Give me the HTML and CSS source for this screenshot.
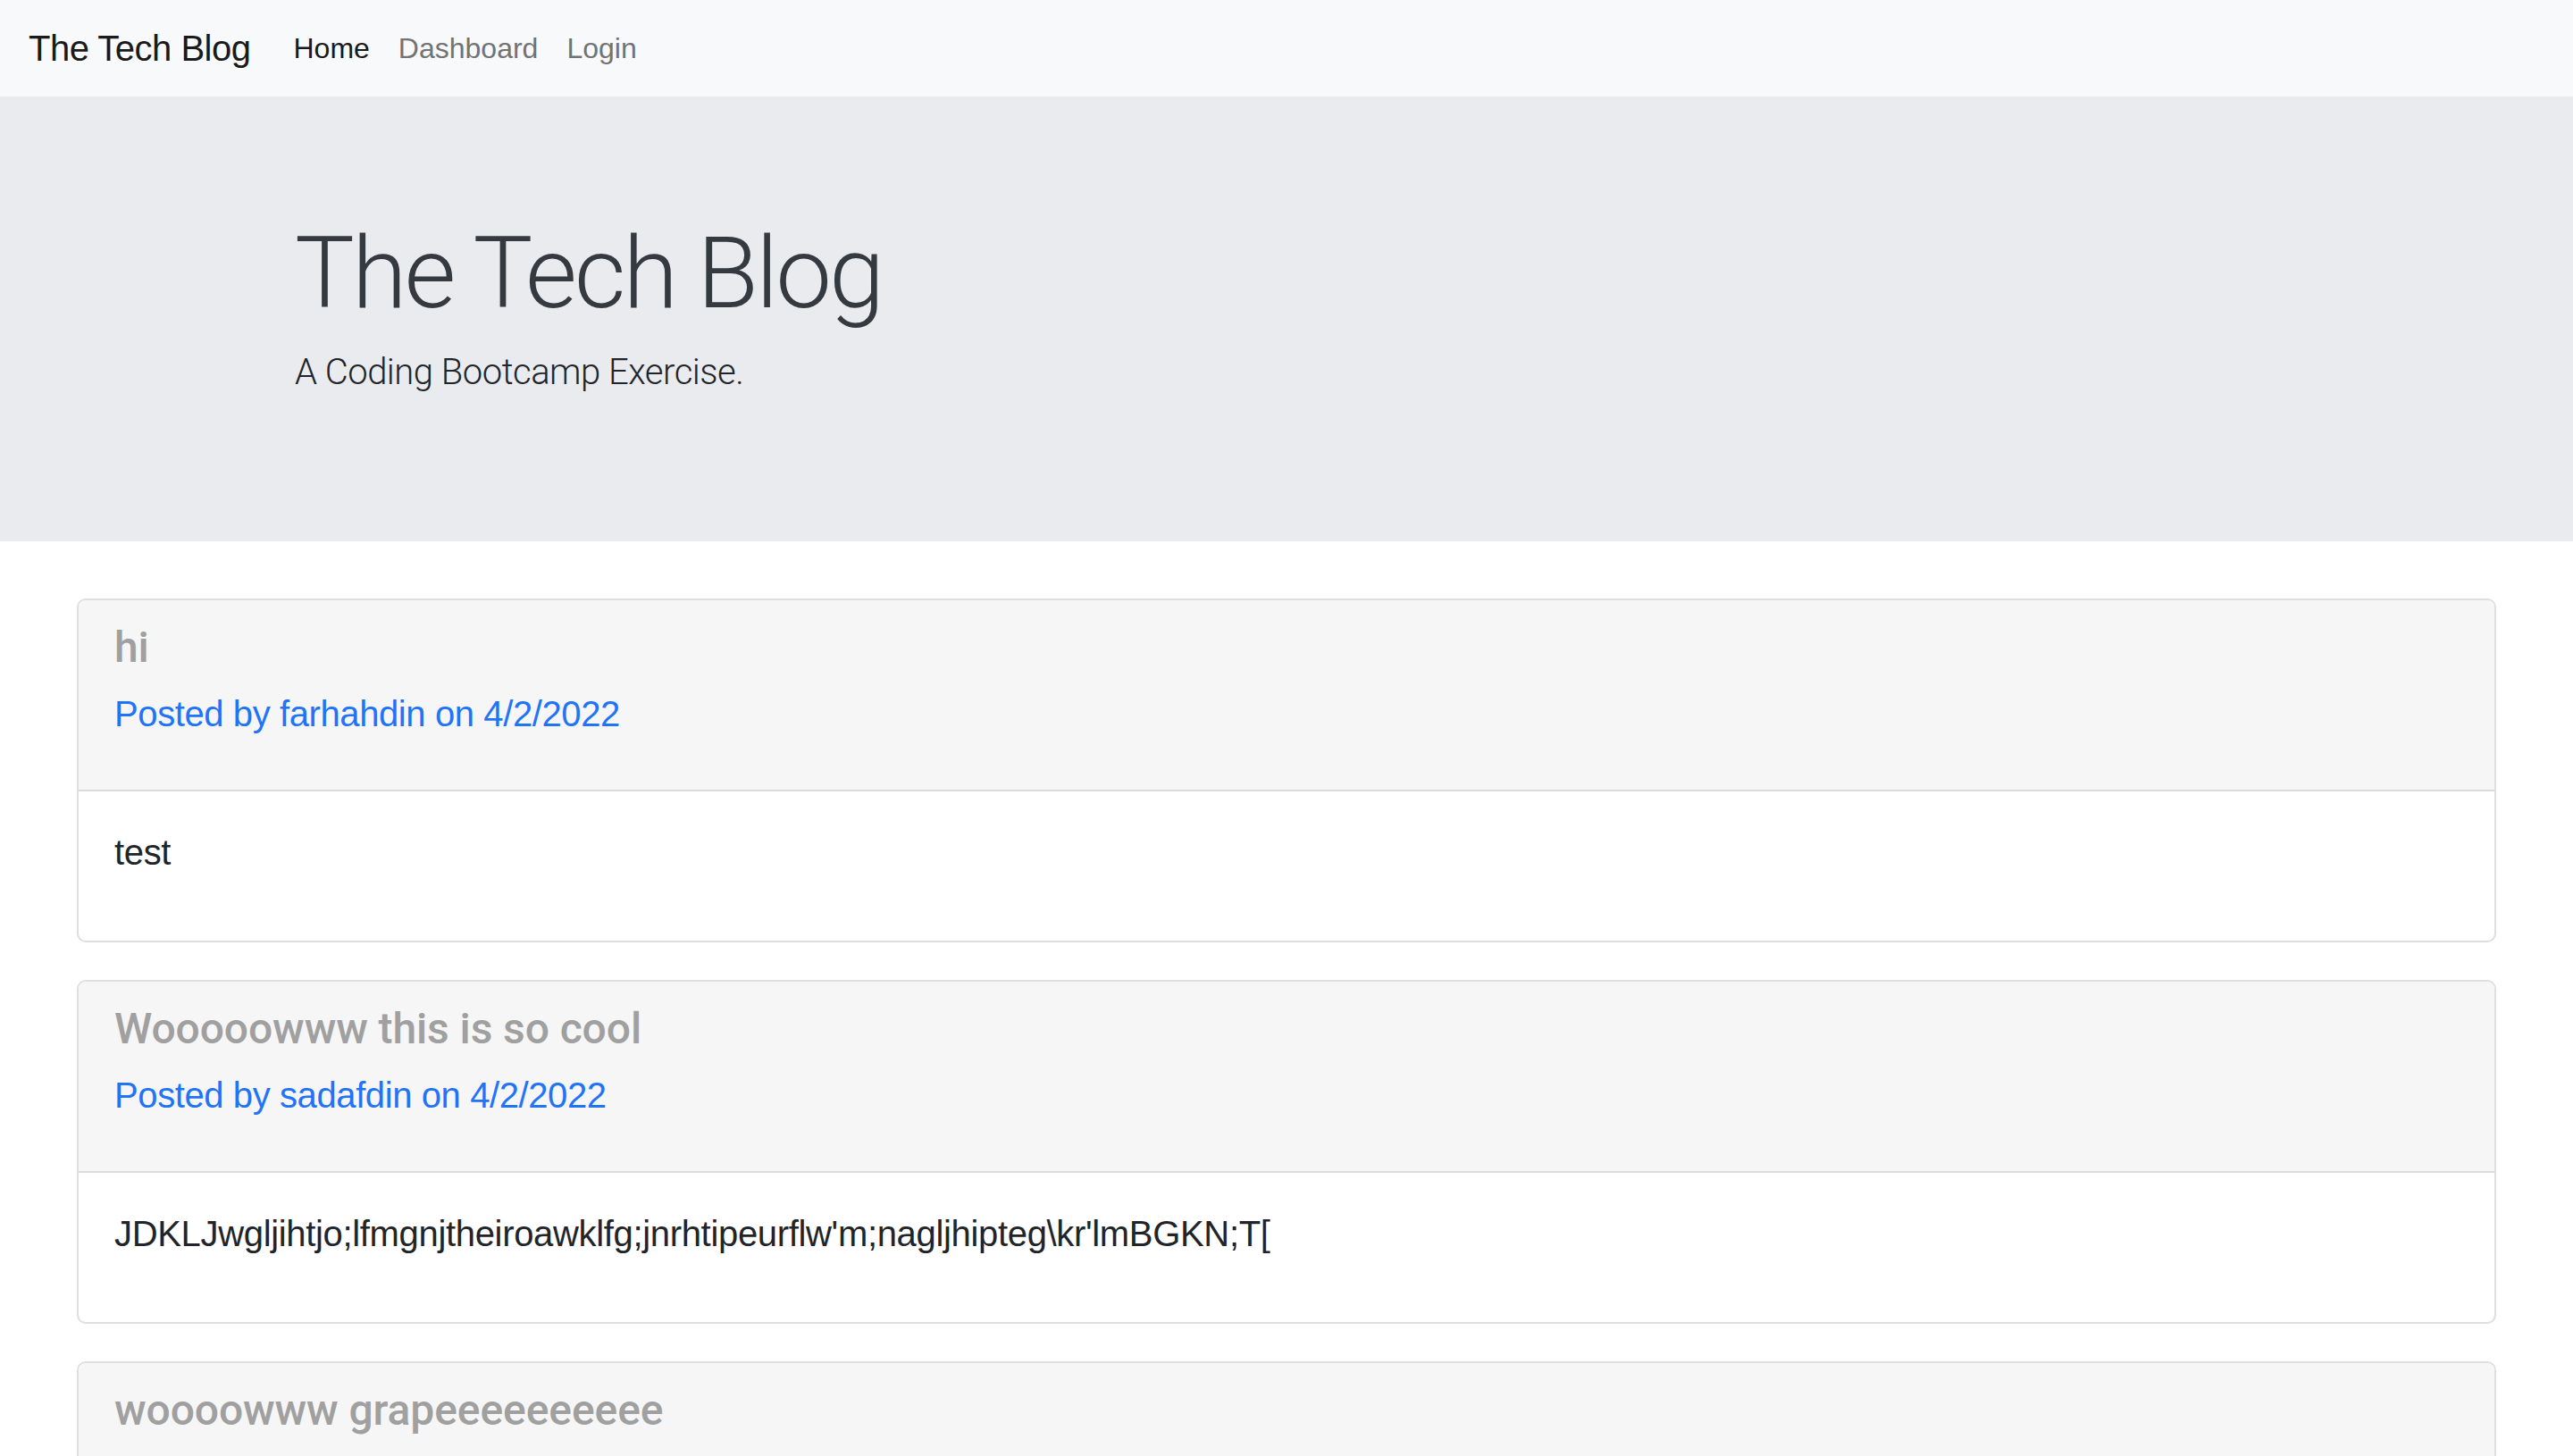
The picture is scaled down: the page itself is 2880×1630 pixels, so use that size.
FILE: index.html
```html
<!DOCTYPE html>
<html lang="en">
<head>
<meta charset="utf-8">
<title>The Tech Blog</title>
<link rel="stylesheet" href="styles.css">
</head>
<body>
<nav class="navbar">
  <a class="brand" href="#">The Tech Blog</a>
  <ul class="nav">
    <li><a class="nav-link active" href="#">Home</a></li>
    <li><a class="nav-link" href="#">Dashboard</a></li>
    <li><a class="nav-link" href="#">Login</a></li>
  </ul>
</nav>
<header class="jumbotron">
  <div class="container">
    <h1 class="display">The Tech Blog</h1>
    <p class="lead">A Coding Bootcamp Exercise.</p>
  </div>
</header>
<main class="posts">
  <article class="card">
    <div class="card-header">
      <h4 class="card-title">hi</h4>
      <p class="meta">Posted by farhahdin on 4/2/2022</p>
    </div>
    <div class="card-body">
      <p>test</p>
    </div>
  </article>
  <article class="card">
    <div class="card-header">
      <h4 class="card-title">Wooooowww this is so cool</h4>
      <p class="meta">Posted by sadafdin on 4/2/2022</p>
    </div>
    <div class="card-body">
      <p>JDKLJwgljihtjo;lfmgnjtheiroawklfg;jnrhtipeurflw'm;nagljhipteg\kr'lmBGKN;T[</p>
    </div>
  </article>
  <article class="card">
    <div class="card-header">
      <h4 class="card-title">woooowww grapeeeeeeeeee</h4>
    </div>
  </article>
</main>
</body>
</html>
```
FILE: styles.css
```css
* {
  box-sizing: border-box;
}

html, body {
  margin: 0;
  padding: 0;
}

body {
  font-family: "Liberation Sans", Arial, sans-serif;
  color: #212529;
  background: #ffffff;
  overflow-x: hidden;
}

a {
  text-decoration: none;
}

/* Navbar */
.navbar {
  display: flex;
  align-items: center;
  height: 108px;
  padding: 0 32px;
  background: #f8f9fa;
}

.brand {
  font-size: 40px;
  line-height: 60px;
  letter-spacing: -0.5px;
  color: #1a1a1a;
  margin-right: 32px;
}

.nav {
  display: flex;
  list-style: none;
  margin: 0;
  padding: 0;
}

.nav-link {
  display: block;
  font-size: 32px;
  line-height: 46px;
  padding: 0 16px;
  color: #727374;
}

.nav-link.active {
  color: #1a1a1a;
}

/* Jumbotron */
.jumbotron {
  background: #e9ebef;
  padding: 131px 0 0;
  height: 498px;
}

.container {
  width: 2280px;
  margin: 0 auto;
  padding: 0 30px;
}

.display {
  font-family: Roboto, "Liberation Sans", sans-serif;
  font-weight: 300;
  font-size: 112px;
  line-height: 134px;
  margin: 0 0 14px;
  color: #343a40;
  letter-spacing: -3px;
}

.lead {
  font-family: Roboto, "Liberation Sans", sans-serif;
  font-weight: 300;
  font-size: 40px;
  line-height: 60px;
  letter-spacing: -0.5px;
  margin: 0;
  color: #212529;
}

/* Posts */
.posts {
  padding: 64px 86px 0;
}

.card {
  border: 2px solid #dfdfdf;
  border-radius: 10px;
  overflow: hidden;
  margin-bottom: 42px;
  background: #ffffff;
}

.card-header {
  background: #f6f6f6;
  border-bottom: 2px solid #dcdcdc;
  padding: 24px 40px 55px;
  height: 214px;
}

.card-title {
  font-family: Roboto, "Liberation Sans", sans-serif;
  font-weight: 500;
  font-size: 48px;
  line-height: 58px;
  letter-spacing: -0.1px;
  margin: 0 0 15px;
  color: #a0a0a0;
}

.meta {
  font-size: 40px;
  line-height: 60px;
  letter-spacing: -0.4px;
  margin: 0;
  color: #1f74f7;
}

.card-body {
  padding: 38px 40px 69px;
}

.card-body p {
  font-size: 40px;
  line-height: 60px;
  letter-spacing: -0.33px;
  margin: 0;
  color: #212529;
}
```
